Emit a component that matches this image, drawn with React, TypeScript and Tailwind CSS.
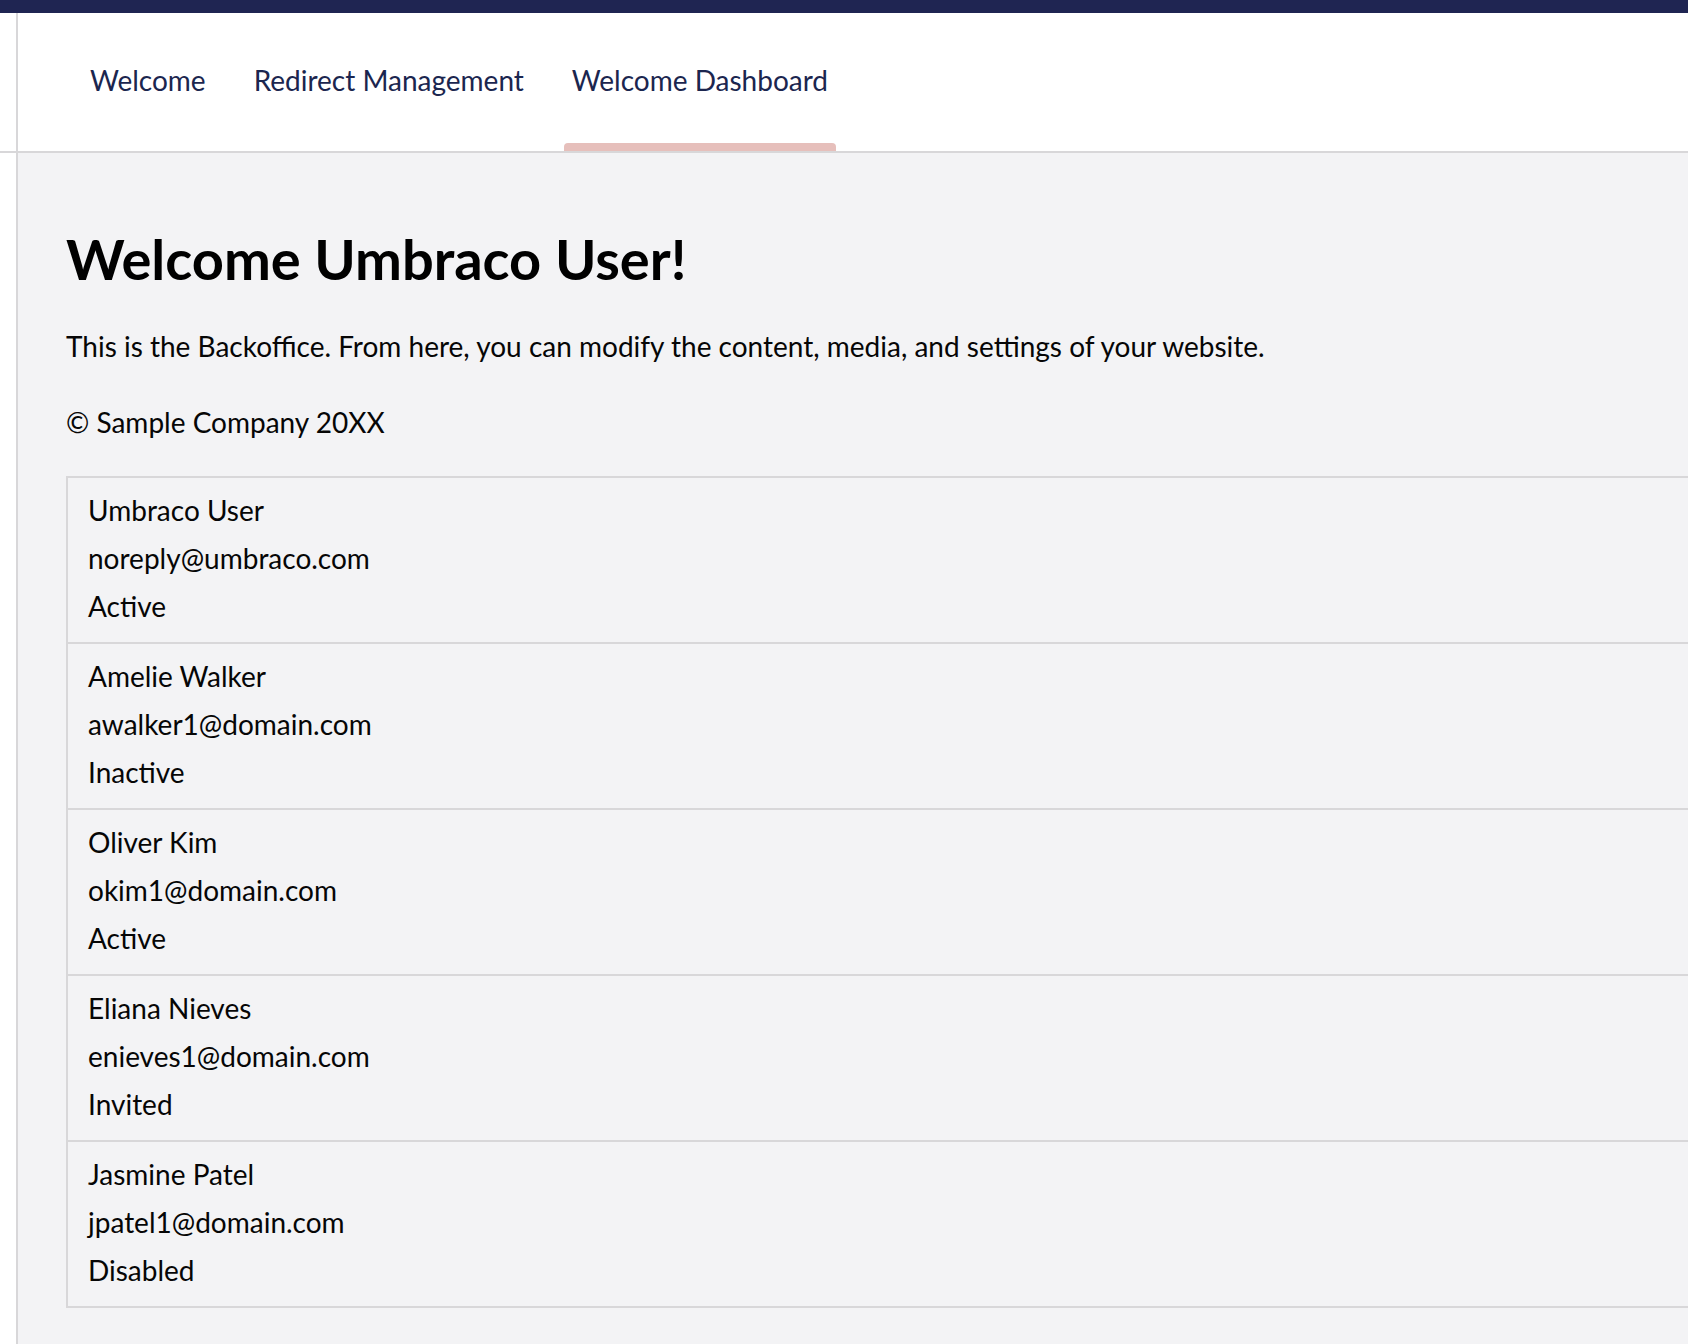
const tabs = [
  { label: "Welcome", active: false },
  { label: "Redirect Management", active: false },
  { label: "Welcome Dashboard", active: true },
];

const users = [
  { name: "Umbraco User", email: "noreply@umbraco.com", status: "Active" },
  { name: "Amelie Walker", email: "awalker1@domain.com", status: "Inactive" },
  { name: "Oliver Kim", email: "okim1@domain.com", status: "Active" },
  { name: "Eliana Nieves", email: "enieves1@domain.com", status: "Invited" },
  { name: "Jasmine Patel", email: "jpatel1@domain.com", status: "Disabled" },
];

export default function App() {
  return (
    <div className="h-screen overflow-hidden bg-[#f3f3f5] font-['Lato',sans-serif] text-[28px] text-[#060606]">
      {/* top app bar */}
      <div className="h-[13px] bg-[#1f2552]" />

      {/* tab header */}
      <div className="flex h-[140px] border-b-2 border-[#d8d7d9] bg-white">
        <div className="w-[18px] shrink-0 border-r-2 border-[#d8d7d9]" />
        <nav className="flex pl-[48px]">
          {tabs.map((tab) => (
            <div key={tab.label} className="relative flex h-full items-center px-[24px] pb-[4px] leading-[48px] text-[#1b264f]">
              {tab.label}
              {tab.active && (
                <span className="absolute bottom-0 left-[16px] right-[16px] h-[8px] rounded-t-[4px] bg-[#e6bfbb]" />
              )}
            </div>
          ))}
        </nav>
      </div>

      <div className="flex h-full">
        <div className="w-[18px] shrink-0 border-r-2 border-[#d8d7d9] bg-white" />
        <main className="min-w-0 flex-1 overflow-hidden px-[48px] pt-[72px]">
          <h1 className="mb-[30px] text-[56px] font-bold leading-[1.2] text-black">Welcome Umbraco User!</h1>
          <p className="mb-[28px] leading-[48px]">
            This is the Backoffice. From here, you can modify the content, media, and settings of your website.
          </p>
          <p className="leading-[48px]">© Sample Company 20XX</p>

          <div className="mt-[30px] w-[1700px] divide-y-2 divide-[#d8d7d9] border-2 border-[#d8d7d9]">
            {users.map((user) => (
              <div key={user.email} className="pl-[20px] pt-[8px] pb-[12px] leading-[48px]">
                <div>{user.name}</div>
                <div>{user.email}</div>
                <div>{user.status}</div>
              </div>
            ))}
          </div>
        </main>
      </div>
    </div>
  );
}
